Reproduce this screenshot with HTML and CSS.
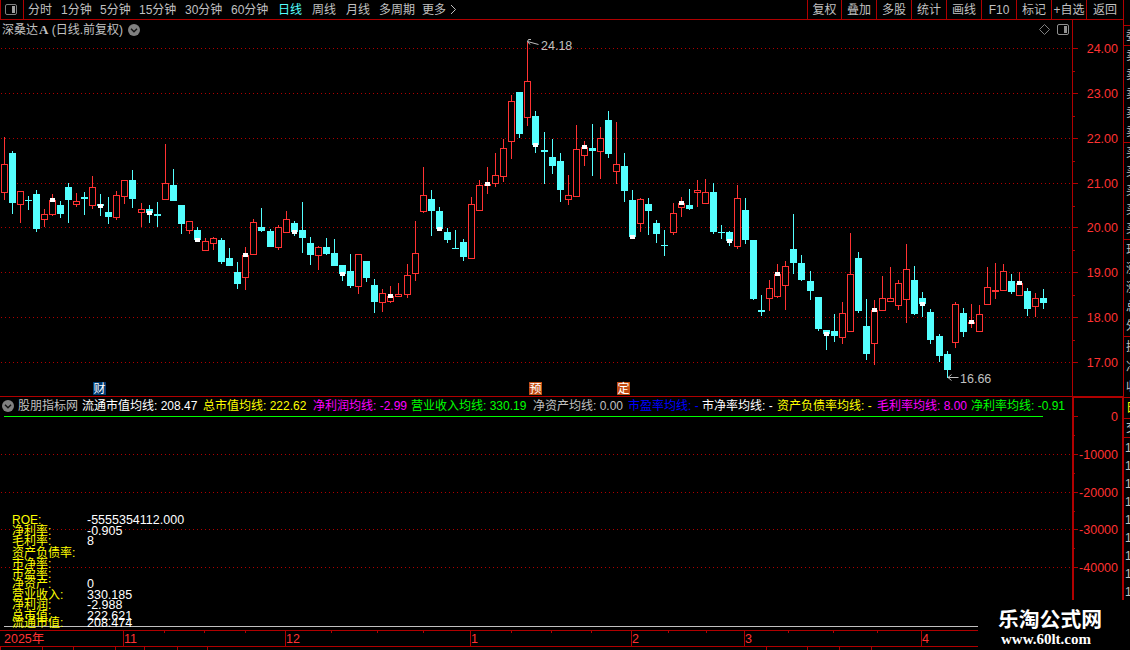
FILE: index.html
```html
<!DOCTYPE html>
<html lang="zh-CN">
<head>
  <meta charset="UTF-8" />
  <meta name="viewport" content="width=device-width, initial-scale=1.0"/>
  <title>深桑达A 日线</title>
  <link rel="stylesheet" href="styles.css">
</head>
<body>
  <div class="terminal">
    <header class="toolbar">
      <button class="panel-btn">
        <svg width="13" height="12" viewBox="0 0 13 12"><rect x="0.5" y="0.5" width="11" height="10" rx="1.5" fill="none" stroke="#808080"/><rect x="7" y="2" width="3" height="7" fill="#a0a0a0"/></svg>
      </button>
      <nav class="periods">
        <a>分时</a><a>1分钟</a><a>5分钟</a><a>15分钟</a><a>30分钟</a><a>60分钟</a><a class="active">日线</a><a>周线</a><a>月线</a><a>多周期</a><a>更多</a>
        <svg width="7" height="11" viewBox="0 0 7 11"><path d="M1 1l4.5 4.5L1 10" fill="none" stroke="#c0c0c0"/></svg>
      </nav>
      <nav class="tools">
        <a>复权</a><a>叠加</a><a>多股</a><a>统计</a><a>画线</a><a>F10</a><a>标记</a><a>+自选</a><a>返回</a>
      </nav>
    </header>

    <main class="charts">
      <section class="pane price-pane">
        <svg id="priceChart" class="plot" width="1123" height="376" viewBox="0 20 1123 376"></svg>
        <div class="stock-title">
          <span>深桑达<b>A</b> (日线.前复权)</span>
          <svg width="12" height="12" viewBox="0 0 12 12"><circle cx="6" cy="6" r="6" fill="#808080"/><path d="M3 4.8l3 3 3-3" fill="none" stroke="#111" stroke-width="1.4"/></svg>
        </div>
        <div class="pane-icons">
          <svg width="11" height="11" viewBox="0 0 11 11"><path d="M5.5 .5l5 5-5 5-5-5z" fill="none" stroke="#808080"/></svg>
          <svg width="12" height="11" viewBox="0 0 12 11"><rect x="0.5" y="0.5" width="11" height="10" rx="1.5" fill="none" stroke="#909090"/><rect x="7" y="2" width="3" height="7" fill="#909090"/></svg>
        </div>
        <i class="event report">财</i>
        <i class="event forecast">预</i>
        <i class="event periodic">定</i>
      </section>

      <section class="pane indicator-pane">
        <svg id="indicatorChart" class="plot" width="1124" height="234" viewBox="0 396 1124 234"></svg>
        <div class="indicator-head">
          <svg width="12" height="12" viewBox="0 0 12 12"><circle cx="6" cy="6" r="6" fill="#808080"/><path d="M3 4.8l3 3 3-3" fill="none" stroke="#111" stroke-width="1.4"/></svg>
          <span>股朋指标网</span>
          <span class="white">流通市值均线: 208.47</span>
          <span class="yellow">总市值均线: 222.62</span>
          <span class="magenta">净利润均线: -2.99</span>
          <span class="green">营业收入均线: 330.19</span>
          <span>净资产均线: 0.00</span>
          <span class="blue">市盈率均线: -</span>
          <span class="white">市净率均线: -</span>
          <span class="yellow">资产负债率均线: -</span>
          <span class="magenta">毛利率均线: 8.00</span>
          <span class="green">净利率均线: -0.91</span>
        </div>
        <dl class="figures">
          <dt>ROE:</dt><dd>-5555354112.000</dd>
          <dt>净利率:</dt><dd>-0.905</dd>
          <dt>毛利率:</dt><dd>8</dd>
          <dt>资产负债率:</dt><dd></dd>
          <dt>市净率:</dt><dd></dd>
          <dt>市盈率:</dt><dd></dd>
          <dt>净资产:</dt><dd>0</dd>
          <dt>营业收入:</dt><dd>330.185</dd>
          <dt>净利润:</dt><dd>-2.988</dd>
          <dt>总市值:</dt><dd>222.621</dd>
          <dt>流通市值:</dt><dd>208.474</dd>
        </dl>
      </section>

      <footer class="time-axis">
        <svg id="timeAxis" width="978" height="20" viewBox="0 630 978 20"></svg>
      </footer>
    </main>

    <aside class="quote">
      <div class="quote-block b1"><span>委</span></div>
      <div class="quote-block b2"><span>卖</span><span>卖</span><span>卖</span><span>卖</span><span>卖</span></div>
      <div class="quote-block b2"><span>买</span><span>买</span><span>买</span><span>买</span><span>买</span></div>
      <div class="quote-block b3"><span>现</span><span>涨</span><span>涨</span><span>总</span><span>外</span></div>
      <div class="quote-block b4"><span>换</span><span>净</span><span>收</span></div>
      <div class="quote-block b5"><span class="tab">日</span></div>
      <div class="quote-block b6"><span>交</span></div>
      <div class="ticks"><span>14</span><span>14</span><span>14</span><span>14</span><span>14</span><span>14</span><span>14</span><span>14</span><span>14</span></div>
    </aside>

    <div class="watermark">
      <strong>乐淘公式网</strong>
      <span>www.60lt.com</span>
    </div>
  </div>
  <script src="script.js"></script>
</body>
</html>
```

FILE: styles.css
```css
* {
  margin: 0;
  padding: 0;
  box-sizing: border-box;
}
body {
  width: 1130px;
  height: 650px;
  overflow: hidden;
  background: #000;
  color: #c0c0c0;
  font-family: "Liberation Sans", "Noto Sans CJK SC", sans-serif;
  font-size: 12px;
  line-height: 14px;
}
svg {
  display: block;
}
svg text {
  font-family: "Liberation Sans", "Noto Sans CJK SC", sans-serif;
  font-size: 12.5px;
}
.terminal {
  position: relative;
  display: grid;
  grid-template-columns: 1123px 7px;
  grid-template-rows: 20px 630px;
  height: 650px;
  overflow: hidden;
}

/* toolbar */
.toolbar {
  display: flex;
  border-bottom: 1px solid #b00000;
  white-space: nowrap;
}
.panel-btn {
  width: 24px;
  padding: 0 0 0 4px;
  background: none;
  border: solid #b00000;
  border-width: 0 1px;
}
.periods {
  display: grid;
  grid-template-columns: 33px 39px 39px 46px 46px 47px 34px 34px 33px 43px 28px 8px;
  align-items: center;
  margin-left: 4px;
}
.periods .active {
  color: #54ffff;
}
.tools {
  display: grid;
  grid-template-columns: 34px repeat(7, 35px) 37px;
  margin-left: auto;
}
.tools a {
  border-left: 1px solid #b00000;
  text-align: center;
  line-height: 20px;
}

/* charts */
.charts {
  display: grid;
  grid-template-rows: 376px 234px 20px;
}
.pane {
  position: relative;
}
.plot {
  position: absolute;
  top: 0;
  left: 0;
}
.stock-title {
  position: relative;
  display: flex;
  align-items: center;
  gap: 5px;
  padding: 2px 0 0 2px;
}
.stock-title span {
  padding-top: 1px;
}
.stock-title b {
  font-family: "Liberation Serif", serif;
  font-size: 13px;
  padding-left: 1px;
}
.pane-icons {
  position: absolute;
  top: 4px;
  left: 1039px;
  display: flex;
  gap: 7px;
}
.event {
  position: absolute;
  top: 362px;
  width: 13px;
  height: 13px;
  line-height: 14px;
  color: #fff;
  font-style: normal;
  text-align: center;
}
.report {
  left: 93px;
  background: #003a70;
}
.forecast {
  left: 529px;
  background: #c04a10;
}
.periodic {
  left: 617px;
  background: #c04a10;
}
.indicator-head {
  position: relative;
  display: grid;
  grid-template-columns: 16px 64px 121px 110px 98px 122px 95px 74px 75px 100px 94px 96px;
  align-items: center;
  height: 16px;
  padding: 2px 0 0 2px;
  white-space: nowrap;
}
.indicator-head span {
  padding-top: 1px;
}
.white {
  color: #fff;
}
.yellow {
  color: #ff0;
}
.magenta {
  color: #f0f;
}
.green {
  color: #0f0;
}
.blue {
  color: #00f;
}
.figures {
  position: relative;
  display: grid;
  grid-template-columns: 75px 110px;
  grid-template-rows: 11px 10px 12px 11px 10px 10px 11px 10px 11px 7px 14px;
  margin: 101px 0 0 12px;
  white-space: nowrap;
}
.figures dt {
  color: #ff0;
}
.figures dd {
  color: #fff;
  font-size: 12.5px;
}

/* quote strip cut off at the window edge */
.quote {
  grid-column: 2;
  grid-row: 1 / 3;
  display: flex;
  flex-direction: column;
  padding-top: 25px;
  overflow: hidden;
  border-left: 1px solid #b00000;
}
.quote-block {
  display: flex;
  flex-direction: column;
  justify-content: space-around;
  flex-shrink: 0;
  padding-left: 2px;
  border-top: 1px solid #b00000;
  overflow: hidden;
}
.b1 {
  height: 20px;
}
.b2 {
  height: 97px;
}
.b3 {
  height: 97px;
}
.b4 {
  height: 61px;
}
.b5 {
  height: 21px;
}
.b6 {
  height: 19px;
}
.tab {
  color: #ff0;
}
.ticks {
  display: flex;
  flex-direction: column;
  height: 163px;
  padding-left: 1px;
  border-top: 1px solid #b00000;
  overflow: hidden;
}
.ticks span {
  height: 18px;
  line-height: 20px;
}

.watermark {
  position: absolute;
  left: 978px;
  top: 600px;
  width: 152px;
  height: 50px;
  padding: 7px 0 0 20px;
  background: #000;
  color: #fff;
}
.watermark strong {
  display: block;
  font: bold 20.8px/22px "Noto Sans CJK SC", sans-serif;
}
.watermark span {
  display: block;
  padding: 1px 0 0 3px;
  font: bold 15px/18px "Liberation Serif", serif;
}
```

FILE: script.js
```js
const RED = "#ff3232";
const CYAN = "#54ffff";
const LINE = "#b00000";
const GREY = "#c0c0c0";

// [direction, high, body top, body bottom, low, white mark]
const candles = [
  ["r",137,164,193,200],["c",151,153,203,214],["r",191,191,205,223],["c",196,200,201,210],["c",190,194,229,232],
  ["r",209,214,220,227],["r",194,200,215,216,198],["c",201,205,214,218],["c",183,187,200,223],["r",193,201,205,207],
  ["c",192,197,199,215],["r",176,187,206,209],["c",194,204,206,216,204],["c",197,212,217,224],["r",191,195,218,220],
  ["r",180,180,197,204],["c",170,180,199,208],["r",203,209,213,227],["c",205,209,213,223,211],["c",202,214,216,227],
  ["r",144,183,200,200],["c",169,185,201,201],["c",205,205,224,234],["r",221,221,231,234],["c",227,230,240,240,238],
  ["r",238,241,251,251],["r",237,238,244,250],["c",238,240,262,264],["c",248,258,266,266],["c",262,272,284,289],
  ["r",247,255,278,290,253],["r",219,222,255,255],["c",208,227,231,232],["c",229,231,247,247],["r",225,227,248,250],
  ["r",211,219,233,233],["c",221,223,232,236,230],["c",202,230,238,253],["c",237,243,255,265],["r",246,247,256,270],
  ["c",238,247,254,255],["c",239,253,266,266],["c",265,265,274,281,272],["c",254,271,286,288],["r",254,254,287,294],
  ["c",261,261,278,282],["c",279,285,302,313],["r",289,293,303,312],["r",286,296,302,303,294],["r",283,294,297,297],
  ["r",264,275,295,298],["r",221,253,274,281],["r",167,195,212,213],["c",190,199,211,236],["c",207,211,229,229,227],
  ["c",228,232,240,243],["c",230,248,249,249],["c",239,242,257,261],["r",197,204,259,259],["r",180,185,211,211],
  ["r",167,184,186,194,182],["r",153,175,184,187],["r",139,148,177,182],["r",95,101,142,159],["c",92,92,134,138],
  ["r",42,81,118,126],["c",111,116,145,153,143],["c",132,150,152,184],["c",139,157,166,174],["c",153,161,190,202],
  ["r",175,195,200,205],["r",125,149,197,197],["r",141,147,156,166,145],["c",124,148,151,176],["r",127,138,152,179],
  ["c",111,120,154,158],["r",122,164,172,184],["c",153,166,191,202],["c",190,200,237,237,235],["r",198,199,224,232],
  ["c",198,204,211,235],["c",220,223,234,243],["c",230,245,246,256],["r",203,213,233,235],["r",197,203,208,217,201],
  ["c",189,205,209,210],["r",180,190,193,207],["r",179,192,204,204],["c",183,192,232,234],["c",225,232,233,239],
  ["c",231,232,241,246,239],["r",185,198,247,249],["c",198,210,240,244],["c",240,240,299,300],["c",295,310,312,316],
  ["r",280,288,299,311],["r",264,274,297,298,272],["r",261,266,286,310],["c",214,249,263,274],["c",255,263,280,281],
  ["c",271,281,291,300],["c",297,297,329,331],["c",330,330,334,350,332],["c",314,331,336,342],["r",302,313,338,344],
  ["r",233,274,332,332],["c",252,258,311,313],["c",299,326,354,360],["r",300,310,344,365,308],["r",276,298,311,311],
  ["r",267,298,302,302],["r",280,283,306,310],["r",244,269,300,323],["c",266,280,314,315],["c",292,298,304,317,302],
  ["c",309,312,340,344],["c",334,336,356,362],["c",351,354,370,378],["r",302,304,343,348],["c",308,313,332,337],
  ["r",304,322,324,328,320],["r",305,314,332,332],["r",267,287,305,305],["r",263,290,292,299],["r",264,271,291,291],
  ["c",274,281,292,294],["r",272,283,296,296,281],["c",288,291,309,316],["r",293,298,307,317],["c",289,298,303,309]
];

function rect(x, y, w, h, fill) {
  return `<rect x="${x}" y="${y}" width="${w}" height="${h}" fill="${fill}"/>`;
}

function label(x, y, text, fill, anchor = "start") {
  return `<text x="${x}" y="${y}" fill="${fill}" text-anchor="${anchor}">${text}</text>`;
}

function gridLine(y) {
  return `<path d="M1 ${y + 0.5}H1072" stroke="${LINE}" stroke-dasharray="1 3"/>`;
}

function drawPrice() {
  let out = "";
  const rows = [48, 93, 138, 183, 227, 272, 317, 362];
  rows.forEach((y, i) => {
    out += gridLine(y) + rect(1073, y, 5, 1, LINE);
    out += label(1118, y + 5, (24 - i).toFixed(2), RED, "end");
    if (i < rows.length - 1) out += rect(1073, y + 23, 2, 1, LINE);
  });
  out += rect(1072, 20, 1, 376, LINE);

  let marks = "";
  candles.forEach(([dir, high, top, bottom, low, mark], i) => {
    const x = Math.floor(1.011 + i * 8.0603);
    if (dir === "c") {
      out += rect(x + 3, high, 1, low - high, CYAN);
      out += rect(x, top, 7, bottom - top, CYAN);
    } else {
      out += rect(x + 3, high, 1, top - high, RED);
      out += rect(x + 3, bottom, 1, low - bottom, RED);
      out += `<rect x="${x + 0.5}" y="${top + 0.5}" width="6" height="${bottom - top - 1}" fill="#000" stroke="${RED}"/>`;
    }
    if (mark) marks += rect(x + 1, mark, 5, 4, "#fff");
  });
  out += marks;

  // highest and lowest price
  out += `<path d="M538.5 44.5L527.5 41.5M531 39.5H528.5L527.5 41.5L530 44.5" fill="none" stroke="${GREY}"/>`;
  out += label(541, 50, "24.18", GREY);
  out += `<path d="M958.5 377.5H948M951.5 374.5L948 377.5L951.5 380.5" fill="none" stroke="${GREY}"/>`;
  out += label(960, 383, "16.66", GREY);
  document.getElementById("priceChart").innerHTML = out;
}

function drawIndicator() {
  let out = "";
  const rows = [416, 454, 492, 529, 567];
  rows.forEach((y, i) => {
    if (i) out += gridLine(y);
    out += rect(1074, y, 4, 1, LINE);
    out += label(1118, y + 5, i ? -10000 * i : 0, RED, "end");
    if (i < rows.length - 1) out += rect(1074, y + 19, 1, 1, LINE);
  });
  out += rect(0, 396, 1072, 1, LINE);
  out += rect(1072, 396, 52, 2, LINE);
  out += rect(1072, 396, 2, 204, LINE);
  out += rect(1122, 396, 2, 204, LINE);
  out += rect(4, 416, 1039, 1, "#00ff00");
  out += rect(4, 626, 974, 1, GREY);
  document.getElementById("indicatorChart").innerHTML = out;
}

function drawTimeAxis() {
  let out = rect(0, 630, 978, 1, LINE) + rect(0, 646, 978, 1, LINE);
  out += label(4, 643, "2025年", RED);
  const months = [[123, "11"], [285, "12"], [470, "1"], [631, "2"], [744, "3"], [921, "4"]];
  months.forEach(([x, text]) => {
    out += rect(x, 630, 1, 16, LINE) + label(x + 1, 643, text, RED);
  });
  [164, 204, 245, 331, 377, 423, 511, 551, 591, 668, 706, 788, 833, 877].forEach(x => {
    out += rect(x, 631, 1, 2, LINE);
  });
  [0, 42, 73, 115, 144, 177, 207, 766, 807, 839, 871].forEach(x => {
    out += rect(x, 647, 1, 3, LINE);
  });
  document.getElementById("timeAxis").innerHTML = out;
}

drawPrice();
drawIndicator();
drawTimeAxis();
```
